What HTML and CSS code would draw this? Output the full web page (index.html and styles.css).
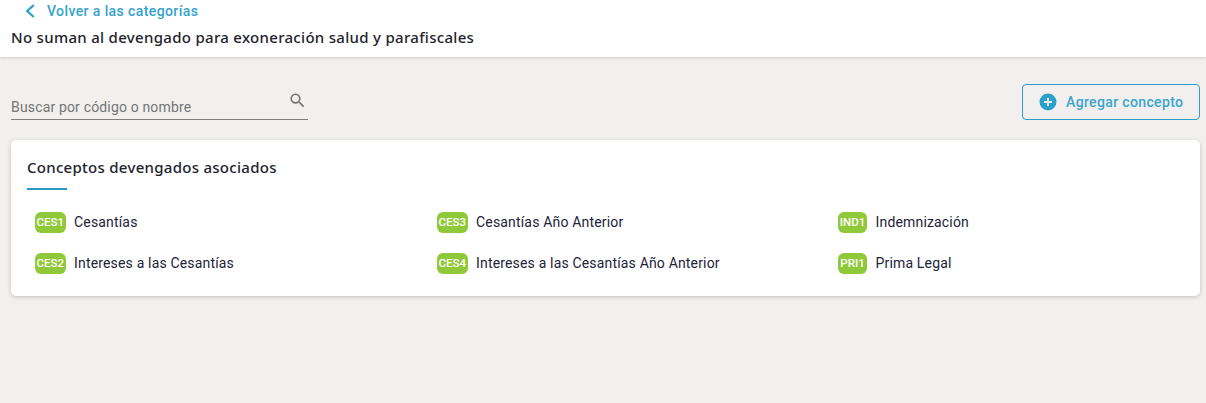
FILE: index.html
```html
<!DOCTYPE html>
<html lang="es">
<head>
<meta charset="utf-8">
<title>Conceptos devengados</title>
<link rel="stylesheet" href="styles.css">
</head>
<body>
<header class="topbar">
  <a class="back" href="#">
    <svg class="back-icon" viewBox="0 0 12 16" width="12" height="16"><path d="M9.8 2 L3.2 8 L9.8 14" fill="none" stroke="#2d9fc9" stroke-width="2.3"/></svg>
    <span>Volver a las categorías</span>
  </a>
  <h1 class="title">No suman al devengado para exoneración salud y parafiscales</h1>
</header>
<main class="content">
  <div class="toolbar">
    <label class="search">
      <span class="search-text">Buscar por código o nombre</span>
      <svg class="search-icon" viewBox="0 0 24 24" width="19" height="19"><path fill="#757575" d="M15.5 14h-.79l-.28-.27A6.47 6.47 0 0 0 16 9.5 6.5 6.5 0 1 0 9.5 16c1.61 0 3.09-.59 4.23-1.57l.27.28v.79l5 4.99L20.49 19l-4.99-5zm-6 0C7.01 14 5 11.99 5 9.5S7.01 5 9.5 5 14 7.01 14 9.5 11.99 14 9.5 14z"/></svg>
    </label>
    <button class="add" type="button">
      <svg class="add-icon" viewBox="0 0 18 18" width="18" height="18"><circle cx="9" cy="9" r="8.5" fill="#2d9fc9"/><path d="M9 5v8M5 9h8" stroke="#f1f0ee" stroke-width="1.8" fill="none"/></svg>
      <span>Agregar concepto</span>
    </button>
  </div>
  <section class="card">
    <h2 class="card-title">Conceptos devengados asociados</h2>
    <div class="rule"></div>
    <ul class="grid">
      <li class="item"><span class="badge">CES1</span>Cesantías</li>
      <li class="item"><span class="badge">CES3</span>Cesantías Año Anterior</li>
      <li class="item"><span class="badge">IND1</span>Indemnización</li>
      <li class="item"><span class="badge">CES2</span>Intereses a las Cesantías</li>
      <li class="item"><span class="badge">CES4</span>Intereses a las Cesantías Año Anterior</li>
      <li class="item"><span class="badge">PRI1</span>Prima Legal</li>
    </ul>
  </section>
</main>
</body>
</html>
```
FILE: styles.css
```css
* { box-sizing: border-box; }
html, body { margin: 0; height: 100%; }
body { background: #f1f0ee; font-family: Roboto, sans-serif; color: #22223a; overflow: hidden; }
.topbar { height: 57px; background: #fff; box-shadow: 0 1px 3px rgba(0,0,0,.14); padding: 2px 0 0 11px; }
.back { display: flex; align-items: center; gap: 11px; height: 18px; margin-left: 13px; color: #35a3cb; font-size: 14px; font-weight: 500; letter-spacing: .4px; text-decoration: none; }
.back-icon { display: block; }
.title { margin: 7px 0 0; font: 500 15px/20px "Noto Sans", sans-serif; color: #22222c; letter-spacing: .3px; }
.content { padding: 27px 6px 0 11px; }
.toolbar { display: flex; justify-content: space-between; align-items: flex-start; }
.search { position: relative; display: flex; align-items: flex-end; width: 297px; height: 36px; border-bottom: 1px solid #7f7f7f; padding-bottom: 3px; }
.search-text { font-size: 14px; line-height: 18px; letter-spacing: .16px; color: #757575; }
.search-icon { position: absolute; right: 1px; top: 7px; }
.add { display: flex; align-items: center; gap: 9px; width: 178px; height: 36px; padding: 0 0 0 16px; background: transparent; border: 1px solid #2d9fc9; border-radius: 4px; color: #3ba5cc; font: 500 14px Roboto, sans-serif; letter-spacing: .36px; }
.add-icon { display: block; }
.card { margin-top: 20px; height: 156px; background: #fff; border-radius: 5px; box-shadow: 0 1px 4px rgba(0,0,0,.2); padding: 17px 16px 0; }
.card-title { margin: 0; font: 500 15px/20px "Noto Sans", sans-serif; color: #22222c; letter-spacing: .28px; }
.rule { width: 40px; height: 2px; margin-top: 11px; background: #2d97c9; }
.grid { display: grid; grid-template-columns: 402px 401px 1fr; grid-auto-rows: 21px; row-gap: 20px; list-style: none; margin: 22px 0 0; padding: 0 0 0 8px; }
.item { display: flex; align-items: center; gap: 8.5px; font-size: 14px; line-height: 19px; letter-spacing: .17px; color: #22223a; }
.badge { display: flex; align-items: center; justify-content: center; height: 21px; padding: 0 1.5px; border-radius: 6px; background: #8fc93a; color: #fff; font-size: 11.5px; font-weight: 500; letter-spacing: 0; min-width: 29px; }
```
